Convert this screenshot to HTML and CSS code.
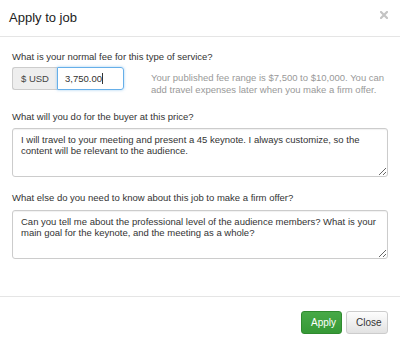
FILE: index.html
```html
<!DOCTYPE html>
<html lang="en">
    <head>
        <meta charset="UTF-8">
        <title>Apply to job</title>
        <link rel="stylesheet" href="styles.css">
    </head>
    <body>
        <div class="modal">
            <div class="modal-header">
                <h4>Apply to job</h4>
                <span class="close-x">
                    <svg width="8" height="8" viewBox="0 0 8 8">
                        <path d="M1 1L7 7M7 1L1 7" stroke="#c4c4c4" stroke-width="2.2" stroke-linecap="square"/>
                    </svg>
                </span>
            </div>

            <div class="modal-body">
                <label>What is your normal fee for this type of service?</label>
                <div class="fee-row">
                    <div class="input-group">
                        <span class="addon">$ USD</span>
                        <div class="fee-input">3,750.00<span class="caret"></span></div>
                    </div>
                    <p class="help">Your published fee range is $7,500 to $10,000. You can add travel expenses later when you make a firm offer.</p>
                </div>

                <label class="gap">What will you do for the buyer at this price?</label>
                <textarea readonly>I will travel to your meeting and present a 45 keynote. I always customize, so the content will be relevant to the audience.</textarea>

                <label class="gap2">What else do you need to know about this job to make a firm offer?</label>
                <textarea readonly>Can you tell me about the professional level of the audience members? What is your main goal for the keynote, and the meeting as a whole?</textarea>
            </div>

            <div class="modal-footer">
                <button class="btn btn-apply">Apply</button>
                <button class="btn btn-close">Close</button>
            </div>
        </div>
    </body>
</html>
```

FILE: styles.css
```css
body {
    margin: 0;
    font-family: "Liberation Sans", Arial, sans-serif;
    color: #333;
    background-color: white;
}

.modal {
    width: 400px;
    height: 345px;
    background-color: white;
}

.modal-header {
    border-bottom: 1px solid #e5e5e5;
    display: flex;
    justify-content: space-between;
    padding: 0 12px 0 9px;
    box-sizing: border-box;
    height: 37px;
}

.modal-header h4 {
    margin: 10px 0 0 0;
    font-size: 13px;
    line-height: 16px;
    font-weight: normal;
    color: #222;
}

.close-x {
    display: flex;
    margin-top: 11px;
    height: 8px;
}

.modal-body {
    padding: 14px 12px 0 12px;
    height: 259px;
    box-sizing: border-box;
}

label {
    display: block;
    font-size: 9.5px;
    line-height: 12px;
    margin-bottom: 4px;
}

label.gap {
    margin-top: 16px;
    margin-bottom: 5px;
}

label.gap2 {
    margin-top: 15px;
    margin-bottom: 6px;
}

.fee-row {
    display: flex;
}

.input-group {
    display: flex;
    height: 23px;
    width: 112px;
    flex-shrink: 0;
}

.addon {
    width: 45px;
    box-sizing: border-box;
    background-color: #eee;
    border: 1px solid #ccc;
    border-right: none;
    border-radius: 3px 0 0 3px;
    font-size: 9.5px;
    line-height: 21px;
    text-align: center;
    color: #444;
}

.fee-input {
    width: 67px;
    box-sizing: border-box;
    border: 1px solid #66afe9;
    border-radius: 0 3px 3px 0;
    box-shadow: 0 0 3px rgba(102, 175, 233, 0.6);
    font-size: 9.5px;
    line-height: 21px;
    padding-left: 7px;
}

.caret {
    display: inline-block;
    width: 1px;
    height: 11px;
    background-color: #333;
    vertical-align: -2px;
}

.help {
    margin: 5px 0 0 27px;
    font-size: 9.5px;
    line-height: 11.5px;
    color: #999;
}

textarea {
    display: block;
    width: 100%;
    height: 49px;
    box-sizing: border-box;
    border: 1px solid #ccc;
    border-radius: 3px;
    box-shadow: inset 0 1px 1px rgba(0,0,0,0.06);
    padding: 5px 8px;
    font-family: "Liberation Sans", Arial, sans-serif;
    font-size: 9.5px;
    line-height: 11px;
    color: #333;
    outline: none;
}

.modal-footer {
    border-top: 1px solid #e5e5e5;
    display: flex;
    justify-content: flex-end;
    gap: 4px;
    padding: 14px 12px 0 0;
}

.btn {
    height: 23px;
    border-radius: 3px;
    font-family: "Liberation Sans", Arial, sans-serif;
    font-size: 10px;
    padding: 0 9px;
    cursor: pointer;
}

.btn-apply {
    width: 41px;
    background: linear-gradient(#47a947, #369936);
    border: 1px solid #2f8a2f;
    color: white;
}

.btn-close {
    width: 42px;
    background: linear-gradient(#fdfdfd, #e2e2e2);
    border: 1px solid #ccc;
    color: #333;
}
```
